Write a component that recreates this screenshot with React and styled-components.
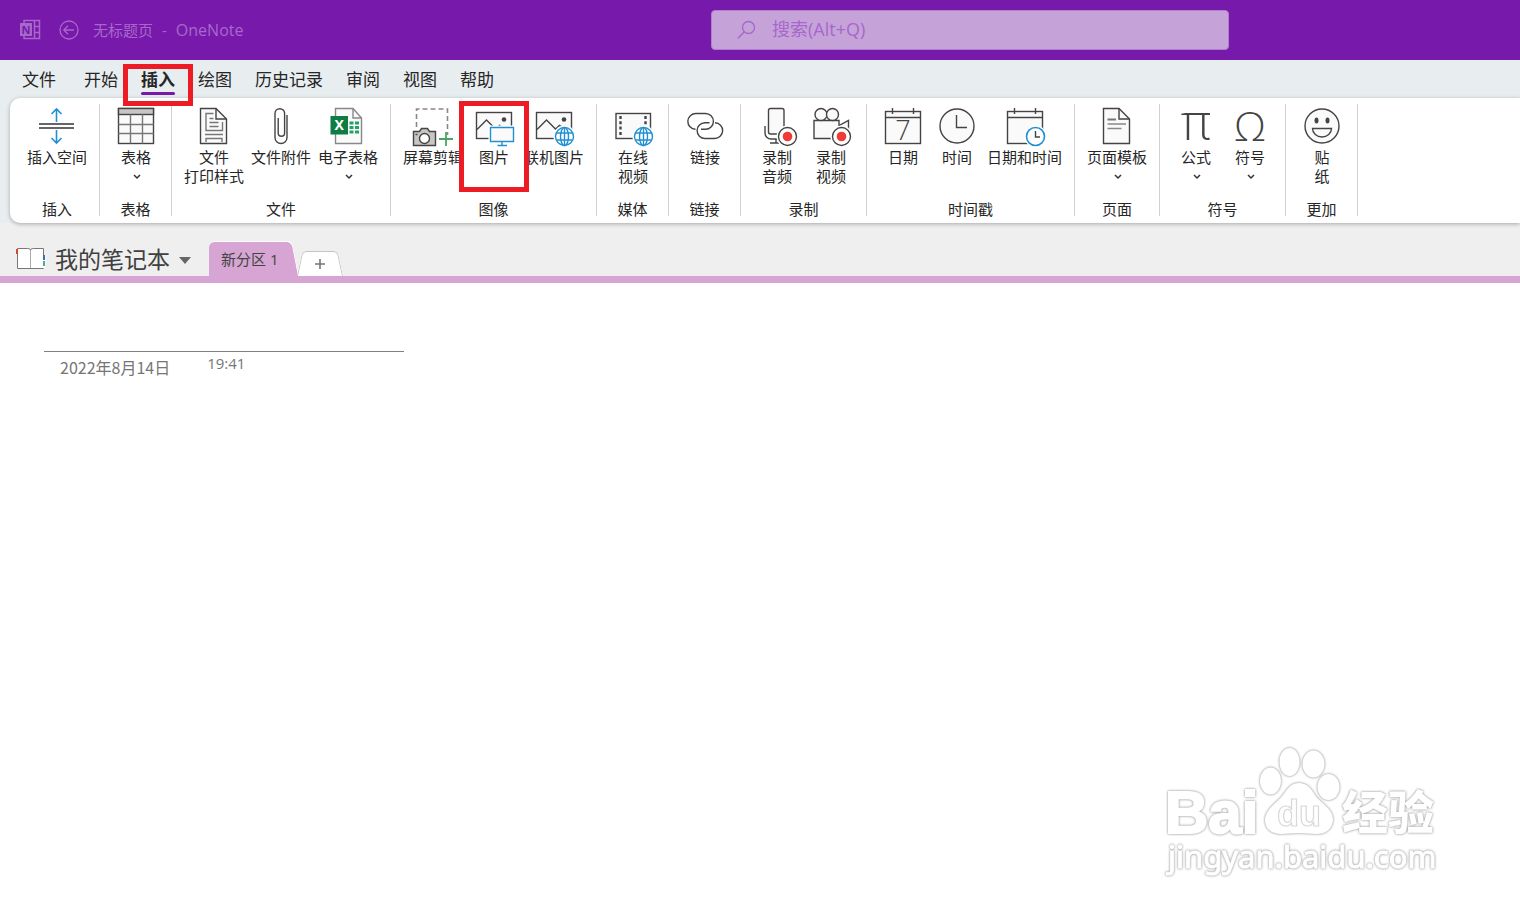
import React, { useState } from 'react';
import styled, { createGlobalStyle } from 'styled-components';

const GlobalStyle = createGlobalStyle`
    * {
        box-sizing: border-box;
    }
    body {
        margin: 0;
        background: #fff;
        font-family: "Open Sans", "Noto Sans CJK SC", sans-serif;
        color: #262626;
    }
    button {
        font-family: inherit;
        color: inherit;
        background: none;
        border: 0;
        padding: 0;
        cursor: pointer;
    }
`;

const Window = styled.div`
    display: flex;
    flex-direction: column;
    min-height: 100vh;
`;

// title bar
const TitleBar = styled.header`
    display: flex;
    align-items: center;
    height: 60px;
    padding-left: 19px;
    background: #7719aa;
    color: #a868cb;
`;
const BackButton = styled.button`
    display: flex;
    margin: 0 14px 0 18px;
`;
const DocTitle = styled.h1`
    display: flex;
    gap: 9px;
    margin: 0;
    font-size: 15px;
    line-height: 20px;
    font-weight: 400;
    white-space: nowrap;
`;
const AppName = styled.span`
    font-size: 16px;
`;
const SearchBox = styled.label`
    display: flex;
    align-items: center;
    gap: 15px;
    flex: 0 1 518px;
    height: 40px;
    margin: 0 291px 0 auto;
    padding: 0 25px;
    border: 1px solid #b07fce;
    border-radius: 4px;
    background: #c5a3d9;
`;
const SearchInput = styled.input`
    flex: 1;
    min-width: 0;
    padding: 0 0 2px;
    border: 0;
    outline: 0;
    background: transparent;
    font-family: inherit;
    font-size: 18px;
    line-height: 24px;
    color: #7719aa;
    &::placeholder {
        color: #a767cb;
        opacity: 1;
    }
`;

// ribbon tabs
const RibbonArea = styled.div`
    background: #e8edf0;
`;
const TabList = styled.nav`
    display: flex;
    gap: 23px;
    height: 38px;
    padding: 7px 0 0 22px;
`;
const Tab = styled.button`
    position: relative;
    align-self: flex-start;
    height: 28px;
    margin-right: ${props => (props.$first ? '5px' : '0')};
    font-size: 17px;
    line-height: 25px;
    font-weight: ${props => (props.$active ? 700 : 400)};
    white-space: nowrap;
    &::after {
        content: '';
        display: block;
        height: 3px;
        border-radius: 2px;
        background: ${props => (props.$active ? '#7719aa' : 'transparent')};
    }
`;
// red frame that marks the next click
const Marker = styled.span`
    position: absolute;
    z-index: 2;
    top: ${props => props.$top}px;
    left: 50%;
    width: 70px;
    height: ${props => props.$height}px;
    margin-left: -35px;
    border: 5px solid #ed1c24;
    pointer-events: none;
`;

// ribbon
const Ribbon = styled.div`
    display: flex;
    position: relative;
    height: 125px;
    margin-left: 10px;
    padding: 6px 0 7px 5px;
    border-radius: 10px 0 0 10px;
    background: #fff;
    box-shadow: 0 1px 4px rgba(0, 0, 0, 0.3);
`;
const Group = styled.section`
    display: flex;
    flex-direction: column;
    justify-content: space-between;
    padding: 2px 8px 0 9px;
    border-right: 1px solid #d0d0d0;
`;
const GroupItems = styled.div`
    display: flex;
    align-items: flex-start;
`;
const GroupName = styled.h2`
    margin: 0 1px 0 0;
    font-size: 15px;
    line-height: 14px;
    font-weight: 400;
    text-align: center;
`;
const Command = styled.button`
    display: flex;
    flex-direction: column;
    align-items: center;
    position: relative;
    min-width: 54px;
    padding: ${props => (props.$wide ? '0 4px 0 3px' : '0 3px')};
    font-size: 15px;
    line-height: 19px;
    white-space: pre;
`;
const IconSvg = styled.svg`
    width: 44px;
    height: 42px;
    fill: none;
    stroke: #444;
    stroke-width: 1.4;
`;
const Chevron = styled.svg`
    width: 9px;
    height: 19px;
    fill: none;
    stroke: #333;
    stroke-width: 1.5;
`;

// notebook bar
const NotebookBar = styled.div`
    display: flex;
    align-items: flex-end;
    height: 60px;
    padding-left: 16px;
    background: #efefef;
    border-bottom: 7px solid #d6a5d3;
`;
const NotebookButton = styled.button`
    display: flex;
    align-items: center;
    gap: 9px;
    height: 35px;
    margin-right: 18px;
    font-size: 23px;
    line-height: 34px;
    color: #404040;
    white-space: nowrap;
`;
const SectionTab = styled.button`
    position: relative;
    z-index: 1;
    height: 35px;
    padding: 0 12px;
    margin-right: 11px;
    border-top: 1px solid #fff;
    border-radius: 6px 0 0 0;
    background: #d6a5d3;
    font-size: 15px;
    line-height: 34px;
    color: #444;
    white-space: nowrap;
    &::after {
        content: '';
        position: absolute;
        z-index: -1;
        top: -1px;
        left: 70%;
        right: -9px;
        bottom: 0;
        border-top: 1px solid #fff;
        border-right: 1px solid #fff;
        border-radius: 0 6px 0 0;
        background: #d6a5d3;
        transform: skewX(11deg);
        transform-origin: bottom;
    }
`;
const AddTab = styled.button`
    display: flex;
    align-items: center;
    justify-content: center;
    position: relative;
    z-index: 0;
    width: 38px;
    height: 25px;
    &::before,
    &::after {
        content: '';
        position: absolute;
        z-index: -1;
        top: 0;
        bottom: 0;
        width: 24px;
        border: 1px solid #c4c4c4;
        border-bottom: 0;
        background: #fff;
        transform-origin: bottom;
    }
    &::before {
        left: -4px;
        border-right: 0;
        border-radius: 5px 0 0 0;
        transform: skewX(-12deg);
    }
    &::after {
        right: -4px;
        border-left: 0;
        border-radius: 0 5px 0 0;
        transform: skewX(12deg);
    }
`;

// page
const Page = styled.main`
    position: relative;
    flex: 1;
    padding: 68px 44px 0;
`;
const PageHeader = styled.div`
    display: flex;
    align-items: flex-start;
    gap: 37px;
    max-width: 360px;
    padding-left: 16px;
    border-top: 1px solid #808080;
    color: #767676;
`;
const PageDate = styled.span`
    padding-top: 4px;
    font-family: "Noto Sans CJK SC", sans-serif;
    font-size: 16px;
    line-height: 22px;
`;
const PageTime = styled.span`
    font-size: 15px;
    line-height: 22px;
`;
const Watermark = styled.svg`
    position: absolute;
    right: 70px;
    bottom: 25px;
    width: 300px;
    height: 150px;
    fill: #fff;
    filter: drop-shadow(0 0 1px #999) drop-shadow(0 0 1px #ddd);
    pointer-events: none;
`;

// small parts that several icons share
const Globe = () => (
    <g stroke="#2190d2" fill="#fff">
        <circle cx="32.5" cy="30.5" r="11" stroke="none" />
        <circle cx="32.5" cy="30.5" r="9" />
        <ellipse cx="32.5" cy="30.5" rx="4" ry="9" />
        <path d="M32.5 21.5v18M24.5 27h16M24.5 34h16" />
    </g>
);
const RecordDot = () => (
    <g>
        <circle cx="32.5" cy="30.5" r="11" fill="#fff" stroke="none" />
        <circle cx="32.5" cy="30.5" r="9" fill="#fff" />
        <circle cx="32.5" cy="30.5" r="4.8" fill="#ef3a36" stroke="none" />
    </g>
);
const Photo = () => (
    <g>
        <rect x="4.5" y="6.5" width="35" height="26" fill="#fafafa" />
        <path d="M5 23.5l9.5-9.5 9 9 4-3.5 3 2" />
        <circle cx="32" cy="13.5" r="2.3" fill="#444" stroke="none" />
    </g>
);
const Calendar = () => (
    <g>
        <rect x="4.5" y="5.5" width="35" height="32" fill="#fafafa" />
        <path d="M4.5 11.5h35M11.5 2v6M32.5 2v6" />
    </g>
);

const icons = {
    space: (
        <>
            <path d="M4 18h35M4 22h35" stroke="#666" strokeWidth="1.8" />
            <path d="M21.5 16V3M16.5 8l5-5 5 5M21.5 24v13M16.5 32l5 5 5-5" stroke="#2190d2" strokeWidth="1.6" />
        </>
    ),
    table: (
        <>
            <rect x="4.5" y="2.5" width="35" height="35" fill="#fafafa" />
            <rect x="4.5" y="2.5" width="35" height="6" fill="#c8c6c4" />
            <path d="M16.5 8.5v29M28.5 8.5v29M4.5 18.5h35M4.5 27.5h35" stroke="#777" />
        </>
    ),
    printout: (
        <>
            <path d="M8.5 2.5H24l10.5 10.5v24.5h-26z" fill="#fafafa" />
            <path d="M24 2.5V13h10.5" />
            <path d="M21.5 7.5H14v17h16.5V16M17.5 12.5h4M17.5 16.5h9M17.5 20.5h9M13 28.5h18M14 36v-3.5h16V36" stroke="#777" />
        </>
    ),
    clip: <path d="M28 9v22.5a6 6 0 0 1-12 0V7.5a4.8 4.8 0 0 1 9.6 0V27a3.2 3.2 0 0 1-6.4 0V12" />,
    excel: (
        <>
            <path d="M9.5 2.5H27l8.5 9.5v25.5h-26z" fill="#fafafa" stroke="#888" />
            <path d="M27 2.5V12h8.5" stroke="#888" />
            <rect x="4.5" y="10" width="17.5" height="18.5" fill="#107c41" stroke="none" />
            <path d="M23.5 17h4M29 17h4M23.5 21.5h4M29 21.5h4M23.5 26h4M29 26h4" stroke="#21a366" strokeWidth="3.2" />
            <text x="13.2" y="24" textAnchor="middle" fontSize="14" fontWeight="700" fill="#fff" stroke="none">X</text>
        </>
    ),
    clipping: (
        <>
            <path d="M5.5 21V3h31v26" stroke="#888" strokeDasharray="5 3" strokeWidth="1.6" />
            <path d="M2.5 25.5h6l2-3h6l2 3h6v14h-22z" fill="#c8c6c4" />
            <circle cx="13.5" cy="32.5" r="5" fill="#fff" />
            <path d="M4.5 28.5h2" />
            <path d="M35 26v14M28 33h14" stroke="#4aa564" strokeWidth="1.8" />
        </>
    ),
    picture: (
        <>
            <Photo />
            <rect x="16.5" y="19.5" width="27" height="22" fill="#fff" stroke="none" />
            <path d="M18.5 21.5h23v14h-23zM30 35.5v4M25.5 39.5h9.5" fill="#fafafa" stroke="#2190d2" />
        </>
    ),
    onlinePicture: <><Photo /><Globe /></>,
    onlineVideo: (
        <>
            <rect x="5" y="7.5" width="34.5" height="25" fill="#fafafa" />
            <path d="M9.5 10v21M34.5 10v9" strokeDasharray="3 2.3" strokeWidth="2.4" />
            <Globe />
        </>
    ),
    link: (
        <path d="M12.5 23.3A7.9 7.9 0 0 1 13 7.5h9.5a7.9 7.9 0 0 1 0 15.8h-4.5M32 16.7a7.9 7.9 0 0 1-.5 15.8H22a7.9 7.9 0 0 1 0-15.8h4.5" />
    ),
    audio: (
        <>
            <rect x="13.5" y="2.5" width="15.5" height="25.5" rx="2" fill="#fafafa" />
            <path d="M10 20v7a6 6 0 0 0 6 6h6M21 33v4M15 37h9" />
            <RecordDot />
        </>
    ),
    video: (
        <>
            <path d="M5 14.5h25v5l9.5-5V30l-9.5-4v6.5H5z" fill="#fafafa" />
            <circle cx="12" cy="8.5" r="6" fill="#fafafa" />
            <circle cx="23.5" cy="8.5" r="6" fill="#fafafa" />
            <RecordDot />
        </>
    ),
    date: (
        <>
            <Calendar />
            <text x="22" y="34" textAnchor="middle" fontSize="27" fontWeight="300" fill="#444" stroke="none">7</text>
        </>
    ),
    time: (
        <>
            <circle cx="22" cy="20" r="17" fill="#fafafa" />
            <path d="M21.5 9v12.5H32" />
        </>
    ),
    dateTime: (
        <>
            <Calendar />
            <circle cx="32.5" cy="30.5" r="11" fill="#fff" stroke="none" />
            <circle cx="32.5" cy="30.5" r="9" fill="#fff" stroke="#2190d2" strokeWidth="1.6" />
            <path d="M32.5 25v6h4.5" />
        </>
    ),
    template: (
        <>
            <path d="M8.5 2.5H24l10.5 10.5v24.5h-26z" fill="#fafafa" />
            <path d="M24 2.5V13h10.5" />
            <path d="M12.5 13.5h8.5" stroke="#777" strokeWidth="2" />
            <path d="M12.5 18h18.5M12.5 22.5h14" stroke="#888" />
        </>
    ),
    equation: <text x="22" y="34" textAnchor="middle" fontSize="50" fontWeight="300" fill="#444" stroke="none">π</text>,
    symbol: <text x="22" y="35" textAnchor="middle" fontSize="41" fontWeight="300" fill="#444" stroke="none">Ω</text>,
    sticker: (
        <>
            <circle cx="22" cy="20" r="17" fill="#fafafa" />
            <ellipse cx="16.5" cy="14.5" rx="2" ry="3" fill="#444" stroke="none" />
            <ellipse cx="27.5" cy="14.5" rx="2" ry="3" fill="#444" stroke="none" />
            <path d="M12.5 22.5h19a9.5 8.5 0 0 1-19 0z" />
        </>
    ),
};

const tabs = ['文件', '开始', '插入', '绘图', '历史记录', '审阅', '视图', '帮助'];

const groups = [
    { name: '插入', items: [{ icon: 'space', label: '插入空间' }] },
    { name: '表格', items: [{ icon: 'table', label: '表格', menu: true }] },
    {
        name: '文件',
        items: [
            { icon: 'printout', label: '文件\n打印样式' },
            { icon: 'clip', label: '文件附件' },
            { icon: 'excel', label: '电子表格', menu: true },
        ],
    },
    {
        name: '图像',
        items: [
            { icon: 'clipping', label: '屏幕剪辑' },
            { icon: 'picture', label: '图片', marked: true },
            { icon: 'onlinePicture', label: '联机图片' },
        ],
    },
    { name: '媒体', items: [{ icon: 'onlineVideo', label: '在线\n视频' }] },
    { name: '链接', items: [{ icon: 'link', label: '链接' }] },
    {
        name: '录制',
        items: [
            { icon: 'audio', label: '录制\n音频' },
            { icon: 'video', label: '录制\n视频' },
        ],
    },
    {
        name: '时间戳',
        items: [
            { icon: 'date', label: '日期' },
            { icon: 'time', label: '时间' },
            { icon: 'dateTime', label: '日期和时间' },
        ],
    },
    { name: '页面', items: [{ icon: 'template', label: '页面模板', menu: true }] },
    {
        name: '符号',
        items: [
            { icon: 'equation', label: '公式', menu: true },
            { icon: 'symbol', label: '符号', menu: true },
        ],
    },
    { name: '更加', items: [{ icon: 'sticker', label: '贴\n纸' }] },
];

const RibbonCommand = ({ icon, label, menu, marked }) => (
    <Command type="button" $wide={label.split('\n').some(line => line.length > 3)}>
        <IconSvg viewBox="0 0 44 42" aria-hidden="true">{icons[icon]}</IconSvg>
        <span>{label}</span>
        {menu && (
            <Chevron viewBox="0 0 9 19" aria-hidden="true">
                <path d="M2 8l3 3 3-3" />
            </Chevron>
        )}
        {marked && <Marker $top={-5} $height={91} />}
    </Command>
);

export default function App() {
    const [active, setActive] = useState('插入');
    const [query, setQuery] = useState('');

    return (
        <Window>
            <GlobalStyle />
            <TitleBar>
                <svg width="22" height="22" viewBox="0 0 22 22" fill="none" stroke="#a868cb" strokeWidth="1.5" aria-hidden="true">
                    <path d="M5 4V1.5h15.5v18H5V17M15.5 1.5v18M15.5 7.5h5M15.5 13.5h5" />
                    <rect x="1" y="4" width="12" height="13" fill="#a868cb" stroke="none" />
                    <text x="7" y="14.5" textAnchor="middle" fontSize="11" fontWeight="700" fill="#7719aa" stroke="none">N</text>
                </svg>
                <BackButton type="button" aria-label="返回">
                    <svg width="20" height="20" viewBox="0 0 20 20" fill="none" stroke="#a868cb" strokeWidth="1.3">
                        <circle cx="10" cy="10" r="9" />
                        <path d="M15 10H5M9 5.8L4.8 10 9 14.2" />
                    </svg>
                </BackButton>
                <DocTitle>
                    <span>无标题页</span>
                    <span>-</span>
                    <AppName>OneNote</AppName>
                </DocTitle>
                <SearchBox>
                    <svg width="20" height="20" viewBox="0 0 20 20" fill="none" stroke="#a767cb" strokeWidth="1.4" aria-hidden="true">
                        <circle cx="11.5" cy="7.5" r="6" />
                        <path d="M7.3 11.8L0.8 18.5" />
                    </svg>
                    <SearchInput
                        aria-label="搜索"
                        placeholder="搜索(Alt+Q)"
                        value={query}
                        onChange={e => setQuery(e.target.value)}
                    />
                </SearchBox>
            </TitleBar>

            <RibbonArea>
                <TabList>
                    {tabs.map((tab, i) => (
                        <Tab key={tab} type="button" $first={i === 0} $active={tab === active} onClick={() => setActive(tab)}>
                            {tab}
                            {tab === '插入' && <Marker $top={-3} $height={42} />}
                        </Tab>
                    ))}
                </TabList>
                <Ribbon>
                    {groups.map(group => (
                        <Group key={group.name}>
                            <GroupItems>
                                {group.items.map(item => <RibbonCommand key={item.icon} {...item} />)}
                            </GroupItems>
                            <GroupName>{group.name}</GroupName>
                        </Group>
                    ))}
                </Ribbon>
            </RibbonArea>

            <NotebookBar>
                <NotebookButton type="button">
                    <svg width="30" height="24" viewBox="0 0 30 24" fill="none" aria-hidden="true">
                        <path d="M1.5 1.5h10q3 0 3 1.5q0-1.5 3-1.5h10v20h-26z" fill="#fff" stroke="#777" />
                        <path d="M14.5 3v18" stroke="#aaa" />
                        <path d="M1 2v5" stroke="#fff" strokeWidth="3" />
                        <path d="M1 2v5" stroke="#d9472b" strokeWidth="2" />
                        <path d="M28 8v13" stroke="#fff" strokeWidth="3" />
                        <path d="M28 8v5" stroke="#3a72b5" strokeWidth="2" />
                        <path d="M28 14v5" stroke="#5aa58c" strokeWidth="2" />
                    </svg>
                    我的笔记本
                    <svg width="12" height="12" viewBox="0 0 12 12" fill="#666" aria-hidden="true">
                        <path d="M0 4h12L6 11z" />
                    </svg>
                </NotebookButton>
                <SectionTab type="button">新分区 1</SectionTab>
                <AddTab type="button" aria-label="新建分区">
                    <svg width="12" height="12" viewBox="0 0 12 12" stroke="#777" strokeWidth="1.6">
                        <path d="M6 1v10M1 6h10" />
                    </svg>
                </AddTab>
            </NotebookBar>

            <Page>
                <PageHeader>
                    <PageDate>2022年8月14日</PageDate>
                    <PageTime>19:41</PageTime>
                </PageHeader>
                <Watermark viewBox="0 0 300 150" aria-hidden="true">
                    <ellipse cx="120.5" cy="46" rx="10.5" ry="13.5" />
                    <ellipse cx="139.5" cy="27" rx="10" ry="14" />
                    <ellipse cx="163.5" cy="29" rx="11" ry="13.5" />
                    <ellipse cx="178.5" cy="52" rx="11" ry="13" />
                    <path d="M149 48c8 0 12 5 16 12s19 14 18 25c-1 10-8 14-16 14-6 0-12-1-18-1s-12 1-18 1c-9 0-16-5-16-14 0-11 13-18 18-25s8-12 16-12z" />
                    <text x="15" y="98" fontFamily="Liberation Sans" fontSize="60" fontWeight="700" stroke="#fff" strokeWidth="2">Bai</text>
                    <text x="127" y="91" fontFamily="Liberation Sans" fontSize="36" fontWeight="700" stroke="#d8d8d8" strokeWidth="1.2">du</text>
                    <text x="192" y="94" fontFamily="Noto Sans CJK SC" fontSize="46" fontWeight="900">经验</text>
                    <text x="18" y="133" fontFamily="Noto Sans" fontSize="31" fontWeight="400" stroke="#fff">jingyan.baidu.com</text>
                </Watermark>
            </Page>
        </Window>
    );
}
